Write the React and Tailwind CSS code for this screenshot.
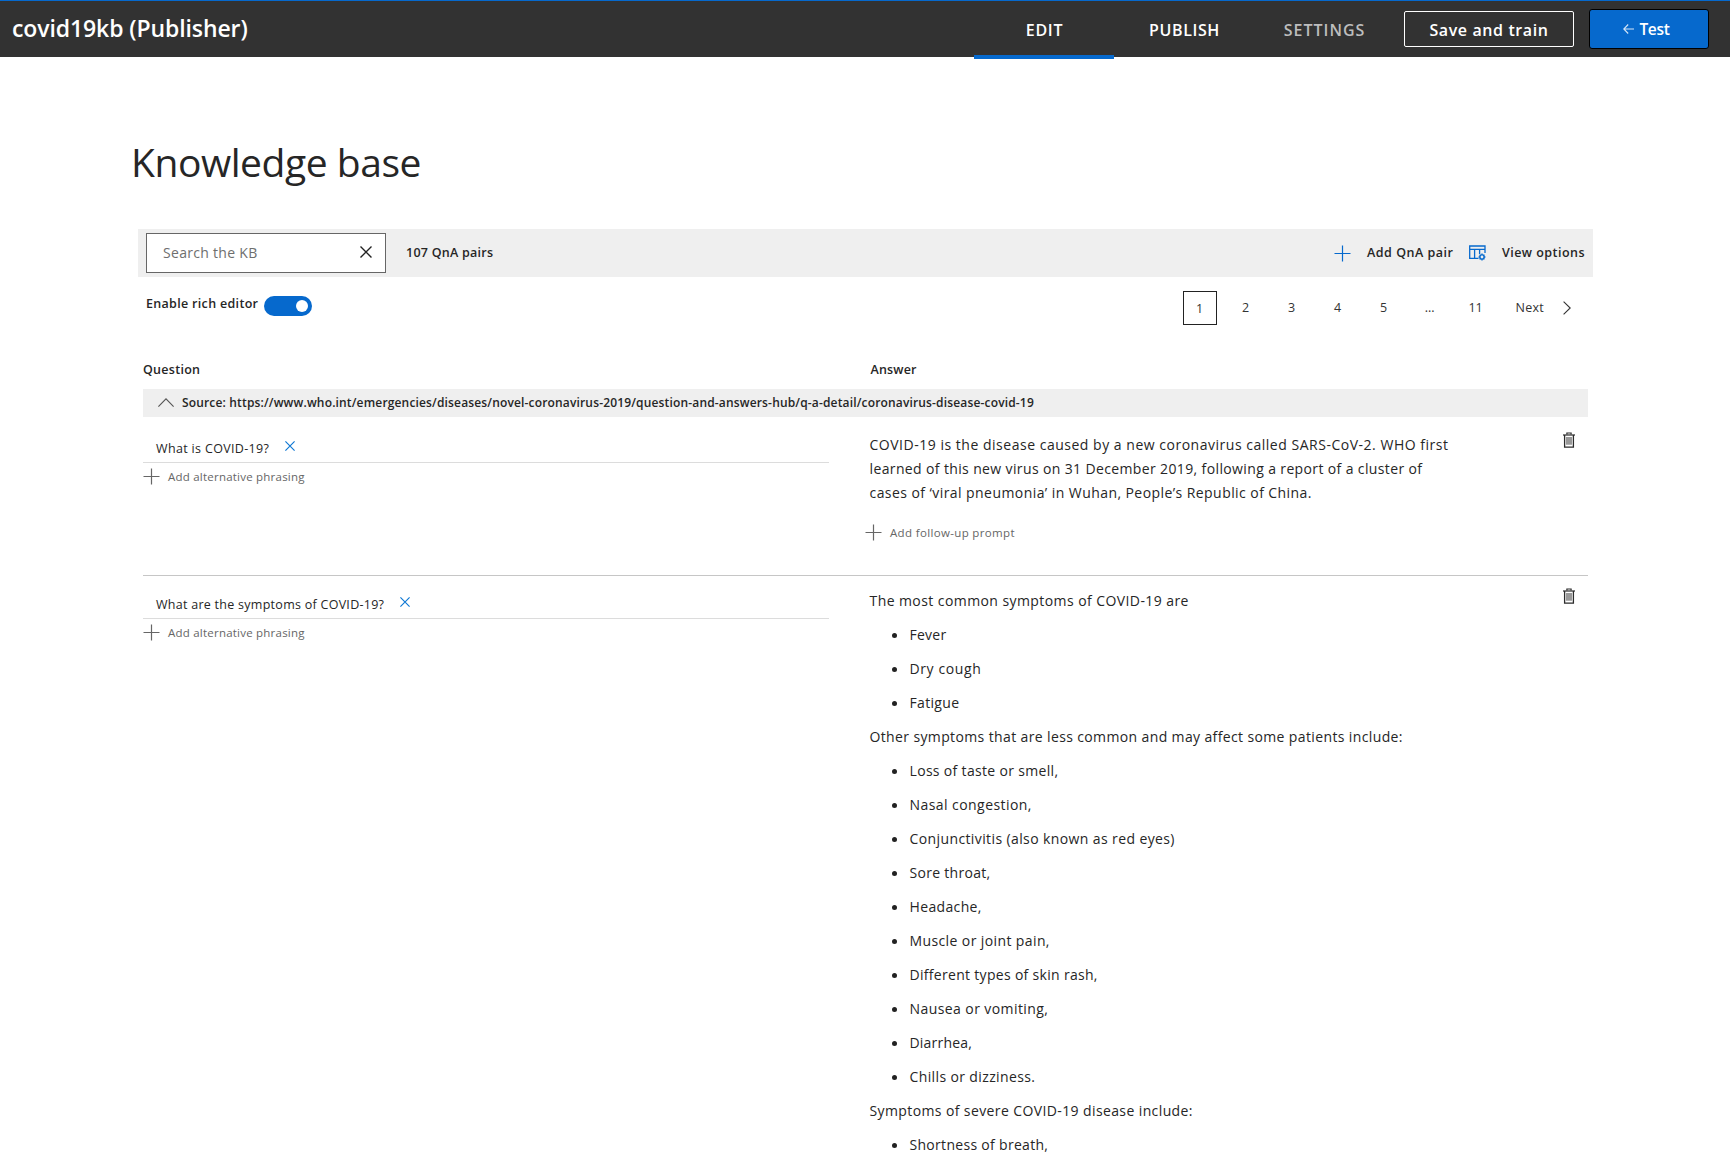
function Plus({ className = "" }) {
  return (
    <svg className={"shrink-0 " + className} width="17" height="17" viewBox="0 0 17 17" fill="none" stroke="currentColor" strokeWidth="1.2">
      <path d="M8.5 0.5V16.5M0.5 8.5H16.5" />
    </svg>
  );
}

function Cross({ size, className = "" }) {
  return (
    <svg className={"shrink-0 " + className} width={size} height={size} viewBox="0 0 12 12" fill="none" stroke="currentColor" strokeWidth="1.4">
      <path d="M0.5 0.5L11.5 11.5M11.5 0.5L0.5 11.5" />
    </svg>
  );
}

function ViewIcon() {
  return (
    <svg className="shrink-0" width="17" height="16" viewBox="0 0 17 16" fill="none" stroke="#0669cd" strokeWidth="1.3">
      <path d="M16 8V1H0.7V13.4H9.5M0.7 4.4H16M5.6 4.4V13.4M10.6 4.4V9" />
      <circle cx="13" cy="12" r="2.1" strokeWidth="1.4" />
      <path d="M13 8.6V9.9M13 14.1V15.4M9.6 12H10.9M15.1 12H16.4M10.6 9.6L11.5 10.5M14.5 13.5L15.4 14.4M15.4 9.6L14.5 10.5M11.5 13.5L10.6 14.4" strokeWidth="1.3" />
    </svg>
  );
}

function Trash() {
  return (
    <svg className="mt-[11px] mr-[13px] ml-auto shrink-0" width="12" height="17" viewBox="0 0 12 17" fill="none" stroke="#2b2b2b">
      <path d="M0 4H12" strokeWidth="1.2" />
      <path d="M3.9 3.6V2H8.1V3.6" strokeWidth="1.2" />
      <path d="M1.6 4V16.2H10.4V4" strokeWidth="1.3" />
      <path d="M4 6V13.8M6 6V13.8M8 6V13.8" strokeWidth="1.2" stroke="#555" />
    </svg>
  );
}

function QnaRow({ question, tracking, children }) {
  return (
    <div className="flex">
      <div className="w-[686px] shrink-0 pt-[18px]">
        <div className="flex h-[25px] items-start border-b border-[#dcdcdc] pl-[13px]">
          <span className={"mt-px text-[12.5px] leading-5 " + tracking}>{question}</span>
          <Cross size={10} className="mt-[3px] ml-4 text-[#0f78d4]" />
        </div>
        <div className="mt-1 flex h-5 items-center text-[#666]">
          <Plus className="-mt-px" />
          <span className="ml-2 text-[11.5px] leading-5 tracking-[0.223px]">Add alternative phrasing</span>
        </div>
      </div>
      <div className="ml-[40.5px] w-[600px] shrink-0 pt-[13px] text-sm leading-6">{children}</div>
      <Trash />
    </div>
  );
}

function Bullets({ items }) {
  return (
    <ul>
      {items.map(([text, tracking]) => (
        <li key={text} className="mb-2.5 flex items-center pl-[22.5px]">
          <span className="mr-[12.5px] size-[5px] rounded-full bg-[#222]" />
          <span className={tracking}>{text}</span>
        </li>
      ))}
    </ul>
  );
}

const common = [
  ["Fever", "tracking-[0.25px]"],
  ["Dry cough", "tracking-[0.6px]"],
  ["Fatigue", "tracking-[0.32px]"],
];
const lessCommon = [
  ["Loss of taste or smell,", "tracking-[0.324px]"],
  ["Nasal congestion,", "tracking-[0.44px]"],
  ["Conjunctivitis (also known as red eyes)", "tracking-[0.391px]"],
  ["Sore throat,", "tracking-[0.3px]"],
  ["Headache,", "tracking-[0.36px]"],
  ["Muscle or joint pain,", "tracking-[0.391px]"],
  ["Different types of skin rash,", "tracking-[0.305px]"],
  ["Nausea or vomiting,", "tracking-[0.42px]"],
  ["Diarrhea,", "tracking-[0.2px]"],
  ["Chills or dizziness.", "tracking-[0.377px]"],
];
const severe = [["Shortness of breath,", "tracking-[0.303px]"]];

export default function App() {
  return (
    <div className="h-[1159px] w-[1730px] overflow-hidden bg-white font-['Open_Sans','Noto_Sans',sans-serif] whitespace-nowrap text-[#262626]">
      <header className="flex h-[57px] items-start border-t border-[#0669cd] bg-[#323232] pr-[21px] pl-3 font-semibold text-white">
        <h1 className="text-[23px] leading-[54px] tracking-[-0.1px]">covid19kb (Publisher)</h1>
        <nav className="ml-auto flex text-base leading-[58px]">
          <a className="h-[58px] w-[140px] border-b-4 border-[#0669cd] pl-px text-center tracking-[0.707px]">EDIT</a>
          <a className="h-[58px] w-[140px] pl-px text-center tracking-[0.605px]">PUBLISH</a>
          <a className="h-[58px] w-[140px] pl-px text-center tracking-[1.01px] text-[#bdbdbd]">SETTINGS</a>
        </nav>
        <button className="mt-[10px] ml-[10px] h-9 w-[170px] rounded-[2px] border border-white text-base leading-[37px] tracking-[0.6px]">Save and train</button>
        <button className="mt-2 ml-[15px] flex h-10 w-[120px] items-center justify-center rounded-[3px] border border-black bg-[#0669cd] pr-[5px] text-base leading-[38px]">
          <svg className="mr-[5px]" width="11" height="10" viewBox="0 0 11 10" fill="none" stroke="#d5e6f7" strokeWidth="1.1">
            <path d="M11 5H0.8M5.2 0.5L0.8 5L5.2 9.5" />
          </svg>
          <span className="text-[15.5px] tracking-[-0.3px]">Test</span>
        </button>
      </header>

      <main className="ml-[138px] w-[1455px]">
        <h2 className="-ml-[7px] pt-[79px] text-[39px] leading-[52px] tracking-[-0.45px]">Knowledge base</h2>

        <div className="mt-[41px] flex h-12 items-center bg-[#efefef] pr-[8px] pl-2 text-[12.5px] font-semibold">
          <div className="flex h-10 w-[240px] items-center justify-between border border-[#666] bg-white pr-[13px] pl-4">
            <span className="text-sm font-normal tracking-[0.3px] text-[#6e6e6e]">Search the KB</span>
            <Cross size={12} className="mb-0.5 text-[#222]" />
          </div>
          <span className="ml-5 tracking-[0.251px]">107 QnA pairs</span>
          <Plus className="ml-auto text-[#0669cd]" />
          <span className="ml-4 w-[87px] tracking-[0.52px]">Add QnA pair</span>
          <span className="ml-[15px]"><ViewIcon /></span>
          <span className="ml-4 w-[83px] tracking-[0.462px]">View options</span>
        </div>

        <div className="flex h-[82px] items-start pl-2 text-[12.5px]">
          <span className="mt-4 w-[113px] leading-[21px] font-semibold tracking-[0.317px]">Enable rich editor</span>
          <span className="mt-[19px] ml-[5px] flex h-5 w-12 items-center justify-end rounded-full bg-[#0669cd] pr-1">
            <span className="size-3 rounded-full bg-white" />
          </span>
          <div className="mt-[14px] mr-[22px] ml-auto flex h-[34px] items-center gap-3 text-center leading-[34px] text-[#333]">
            <span className="h-[34px] w-[34px] border border-[#222] leading-[33px]">1</span>
            <span className="w-[34px]">2</span>
            <span className="w-[34px]">3</span>
            <span className="w-[34px]">4</span>
            <span className="w-[34px]">5</span>
            <span className="w-[34px]">...</span>
            <span className="w-[34px]">11</span>
            <span className="ml-[11px] tracking-[0.25px]">Next</span>
            <svg className="ml-[7px]" width="8" height="14" viewBox="0 0 8 14" fill="none" stroke="#333" strokeWidth="1.1">
              <path d="M0.6 0.6L7.2 7L0.6 13.4" />
            </svg>
          </div>
        </div>

        <div className="ml-[5px] w-[1445px]">
          <div className="flex h-[30px] text-[12.5px] leading-[21px] font-semibold">
            <span className="w-[727.5px] tracking-[0.275px]">Question</span>
            <span className="tracking-[0.181px]">Answer</span>
          </div>
          <div className="mb-[3px] flex h-7 items-center bg-[#efefef] pl-[15px] text-xs font-semibold">
            <svg className="-mt-px" width="16" height="9" viewBox="0 0 16 9" fill="none" stroke="#555" strokeWidth="1.1">
              <path d="M0.4 8.6L8 0.8L15.6 8.6" />
            </svg>
            <span className="ml-2 tracking-[0.16px]">
              Source: https://www.who.int/emergencies/diseases/novel-coronavirus-2019/question-and-answers-hub/q-a-detail/coronavirus-disease-covid-19
            </span>
          </div>

          <div className="h-[156px] border-b border-[#c6c6c6]">
            <QnaRow question="What is COVID-19?" tracking="tracking-[0.341px]">
              <p>
                <span className="tracking-[0.516px]">COVID-19 is the disease caused by a new coronavirus called SARS-CoV-2. WHO first</span>
                <br />
                <span className="tracking-[0.37px]">learned of this new virus on 31 December 2019, following a report of a cluster of</span>
                <br />
                <span className="tracking-[0.432px]">cases of ‘viral pneumonia’ in Wuhan, People’s Republic of China.</span>
              </p>
              <div className="mt-[18px] -ml-[4.5px] flex h-5 items-center text-[#666]">
                <Plus className="-mt-px" />
                <span className="ml-2 text-[11.5px] leading-5 tracking-[0.344px]">Add follow-up prompt</span>
              </div>
            </QnaRow>
          </div>

          <QnaRow question="What are the symptoms of COVID-19?" tracking="tracking-[0.271px]">
            <p className="mb-2.5 tracking-[0.423px]">The most common symptoms of COVID-19 are</p>
            <Bullets items={common} />
            <p className="mb-2.5 tracking-[0.372px]">Other symptoms that are less common and may affect some patients include:</p>
            <Bullets items={lessCommon} />
            <p className="mb-2.5 tracking-[0.391px]">Symptoms of severe COVID-19 disease include:</p>
            <Bullets items={severe} />
          </QnaRow>
        </div>
      </main>
    </div>
  );
}
